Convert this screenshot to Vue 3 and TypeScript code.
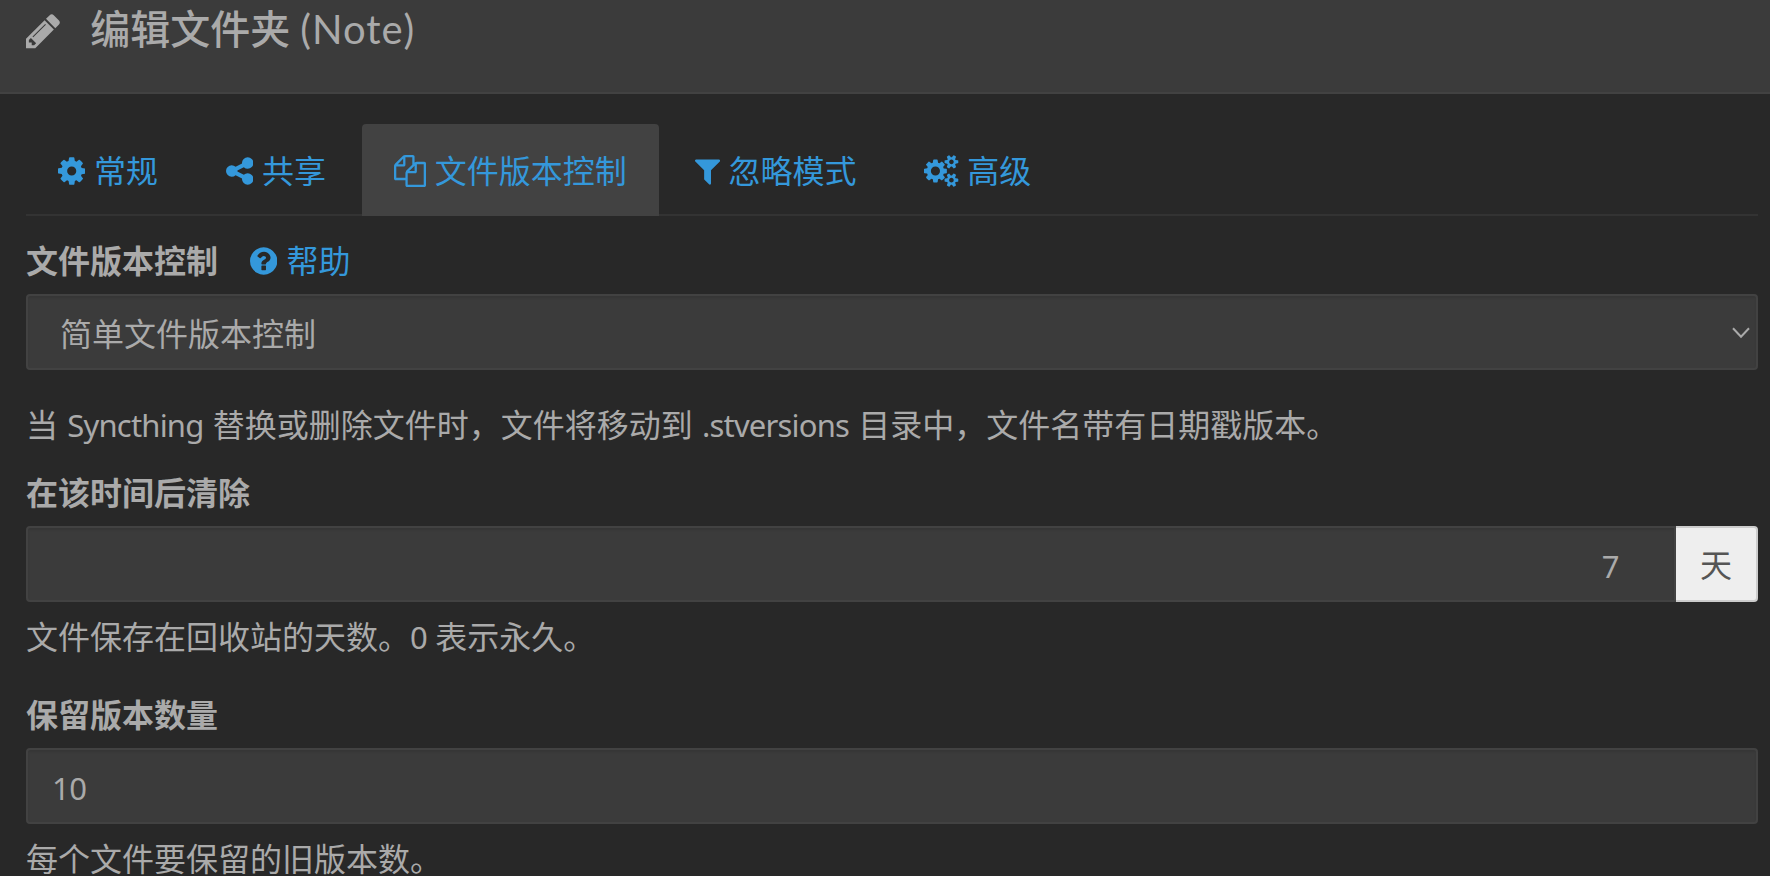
<template>
    <div class="modal">
        <header class="modal-header">
            <svg class="header-icon" viewBox="128 0 1536 1792"><path :d="icons.pencil" /></svg>
            <h4 class="modal-title">编辑文件夹 <span class="title-latin">(Note)</span></h4>
        </header>

        <div class="modal-body">
            <ul class="nav-tabs">
                <li v-for="tab in tabs" :key="tab.label" :class="{ active: tab.label === current }" @click="current = tab.label">
                    <svg class="fa" :style="{ width: `${tab.width / 56}px` }" :viewBox="`${tab.left} 0 ${tab.width} 1792`">
                        <path :d="tab.icon" />
                    </svg>
                    <span>{{ tab.label }}</span>
                </li>
            </ul>

            <div class="label-row">
                <label>文件版本控制</label>
                <a class="help-link">
                    <svg class="fa help-icon" viewBox="128 0 1536 1792"><path :d="icons.question" /></svg>
                    <span>帮助</span>
                </a>
            </div>
            <div class="select-wrap">
                <select class="form-control">
                    <option>简单文件版本控制</option>
                </select>
                <svg class="chevron" viewBox="0 0 18 12"><path d="M1 1.3l8 8.4 8-8.4" /></svg>
            </div>
            <p class="description">当 <span class="latin">Syncthing</span> 替换或删除文件时，文件将移动到 <span class="latin">.stversions</span> 目录中，文件名带有日期戳版本。</p>

            <div class="label-row"><label>在该时间后清除</label></div>
            <div class="input-group">
                <input v-model="cleanoutDays" class="form-control days" type="text">
                <span class="addon">天</span>
            </div>
            <p class="help-block">文件保存在回收站的天数。<span class="latin">0</span> 表示永久。</p>

            <div class="label-row"><label>保留版本数量</label></div>
            <input v-model="keepVersions" class="form-control" type="text">
            <p class="help-block">每个文件要保留的旧版本数。</p>
        </div>
    </div>
</template>

<script setup lang="ts">
import { ref } from 'vue';

type Tab = {
    label: string
    icon: string
    left: number
    width: number
}

const icons = {
    pencil: 'M491 1536l91-91-235-235-91 91v107h128v128h107zm523-928q0-22-22-22-10 0-17 7l-542 542q-7 7-7 17 0 22 22 22 10 0 17-7l542-542q7-7 7-17zm-54-192l416 416-832 832h-416v-416zm683 96q0 53-37 90l-166 166-416-416 166-165q36-38 90-38 53 0 91 38l235 234q37 39 37 91z',
    cog: 'M1152 896q0-106-75-181t-181-75-181 75-75 181 75 181 181 75 181-75 75-181zm512-109v222q0 12-8 23t-20 13l-185 28q-19 54-39 91 35 50 107 138 10 12 10 25t-9 23q-27 37-99 108t-94 71q-12 0-26-9l-138-108q-44 23-91 38-16 136-29 186-7 28-36 28h-222q-14 0-24.5-8.5t-11.5-21.5l-28-184q-49-16-90-37l-141 107q-10 9-25 9-14 0-25-11-126-114-165-168-7-10-7-23 0-12 8-23 15-21 51-66.5t54-70.5q-27-50-41-99l-183-27q-13-2-21-12.5t-8-23.5v-222q0-12 8-23t19-13l186-28q14-46 39-92-40-57-107-138-10-12-10-24 0-10 9-23 26-36 98.5-107.5t94.5-71.5q13 0 26 10l138 107q44-23 91-38 16-136 29-186 7-28 36-28h222q14 0 24.5 8.5t11.5 21.5l28 184q49 16 90 37l142-107q9-9 24-9 13 0 25 10 129 119 165 170 7 8 7 22 0 12-8 23-15 21-51 66.5t-54 70.5q26 50 41 98l183 28q13 2 21 12.5t8 23.5z',
    share: 'M1344 1024q133 0 226.5 93.5t93.5 226.5-93.5 226.5-226.5 93.5-226.5-93.5-93.5-226.5q0-12 2-34l-360-180q-92 86-218 86-133 0-226.5-93.5t-93.5-226.5 93.5-226.5 226.5-93.5q126 0 218 86l360-180q-2-22-2-34 0-133 93.5-226.5t226.5-93.5 226.5 93.5 93.5 226.5-93.5 226.5-226.5 93.5q-126 0-218-86l-360 180q2 22 2 34t-2 34l360 180q92-86 218-86z',
    files: 'M1696 384q40 0 68 28t28 68v1216q0 40-28 68t-68 28h-960q-40 0-68-28t-28-68v-288h-544q-40 0-68-28t-28-68v-672q0-40 20-88t48-76l408-408q28-28 76-48t88-20h416q40 0 68 28t28 68v328q68-40 128-40h416zm-544 213l-299 299h299v-299zm-640-384l-299 299h299v-299zm196 647l316-316v-416h-384v416q0 40-28 68t-68 28h-416v640h512v-256q0-40 20-88t48-76zm956 804v-1152h-384v416q0 40-28 68t-68 28h-416v640h896z',
    filter: 'M1595 295q17 41-14 70l-493 493v742q0 42-39 59-13 5-25 5-27 0-45-19l-256-256q-19-19-19-45v-486l-493-493q-31-29-14-70 17-39 59-39h1280q42 0 59 39z',
    cogs: 'M896 896q0-106-75-181t-181-75-181 75-75 181 75 181 181 75 181-75 75-181zm768 512q0-52-38-90t-90-38-90 38-38 90q0 53 37.5 90.5t90.5 37.5 90.5-37.5 37.5-90.5zm0-1024q0-52-38-90t-90-38-90 38-38 90q0 53 37.5 90.5t90.5 37.5 90.5-37.5 37.5-90.5zm-384 421v185q0 10-7 19.5t-16 10.5l-155 24q-11 35-32 76 34 48 90 115 7 11 7 20 0 12-7 19-23 30-82.5 89.5t-78.5 59.5q-11 0-21-7l-115-90q-37 19-77 31-11 108-23 155-7 24-30 24h-186q-11 0-20-7.5t-10-17.5l-23-153q-34-10-75-31l-118 89q-7 7-20 7-11 0-21-8-144-133-144-160 0-9 7-19 10-14 41-53t47-61q-23-44-35-82l-152-24q-10-1-17-9.5t-7-19.5v-185q0-10 7-19.5t16-10.5l155-24q11-35 32-76-34-48-90-115-7-11-7-20 0-12 7-20 22-30 82-89t79-59q11 0 21 7l115 90q34-18 77-32 11-108 23-154 7-24 30-24h186q11 0 20 7.5t10 17.5l23 153q34 10 75 31l118-89q8-7 20-7 11 0 21 8 144 133 144 160 0 8-7 19-12 16-42 54t-45 60q23 48 34 82l152 23q10 2 17 10.5t7 19.5zm640 533v140q0 16-149 31-12 27-30 52 51 113 51 138 0 4-4 7-122 71-124 71-8 0-46-47t-52-68q-20 2-30 2t-30-2q-14 21-52 68t-46 47q-2 0-124-71-4-3-4-7 0-25 51-138-18-25-30-52-149-15-149-31v-140q0-16 149-31 13-29 30-52-51-113-51-138 0-4 4-7 4-2 35-20t59-34 30-16q8 0 46 46.5t52 67.5q20-2 30-2t30 2q51-71 92-112l6-2q4 0 124 70 4 3 4 7 0 25-51 138 17 23 30 52 149 15 149 31zm0-1024v140q0 16-149 31-12 27-30 52 51 113 51 138 0 4-4 7-122 71-124 71-8 0-46-47t-52-68q-20 2-30 2t-30-2q-14 21-52 68t-46 47q-2 0-124-71-4-3-4-7 0-25 51-138-18-25-30-52-149-15-149-31v-140q0-16 149-31 13-29 30-52-51-113-51-138 0-4 4-7 4-2 35-20t59-34 30-16q8 0 46 46.5t52 67.5q20-2 30-2t30 2q51-71 92-112l6-2q4 0 124 70 4 3 4 7 0 25-51 138 17 23 30 52 149 15 149 31z',
    question: 'M1024 1376v-192q0-14-9-23t-23-9h-192q-14 0-23 9t-9 23v192q0 14 9 23t23 9h192q14 0 23-9t9-23zm256-672q0-88-55.5-163t-138.5-116-170-41q-243 0-371 213-15 24 8 42l132 100q7 6 19 6 16 0 25-12 53-68 86-92 34-24 86-24 48 0 85.5 26t37.5 59q0 38-20 61t-68 45q-63 28-115.5 86.5t-52.5 125.5v36q0 14 9 23t23 9h192q14 0 23-9t9-23q0-19 21.5-49.5t54.5-49.5q32-18 49-28.5t46-35 44.5-48 28-60.5 12.5-81zm384 192q0 209-103 385.5t-279.5 279.5-385.5 103-385.5-103-279.5-279.5-103-385.5 103-385.5 279.5-279.5 385.5-103 385.5 103 279.5 279.5 103 385.5z',
}

const tabs: Tab[] = [
    { label: '常规', icon: icons.cog, left: 128, width: 1536 },
    { label: '共享', icon: icons.share, left: 128, width: 1536 },
    { label: '文件版本控制', icon: icons.files, left: 0, width: 1792 },
    { label: '忽略模式', icon: icons.filter, left: 192, width: 1408 },
    { label: '高级', icon: icons.cogs, left: 0, width: 1920 },
]

const current = ref('文件版本控制')
const cleanoutDays = ref('7')
const keepVersions = ref('10')
</script>

<style>
body {
    background-color: #282828;
}
</style>

<style scoped>
.modal {
    box-sizing: border-box;
    width: 100%;
    height: 876px;
    overflow: hidden;
    background-color: #282828;
    color: #aaa;
    font-family: "Noto Sans", "Noto Sans CJK SC", sans-serif;
    font-size: 32px;
    line-height: 46px;
}

.modal * {
    box-sizing: border-box;
}

.modal-header {
    display: flex;
    align-items: flex-start;
    height: 94px;
    padding: 0 26px;
    background-color: #3b3b3b;
    border-bottom: 2px solid #424242;
}

.header-icon {
    width: 34.3px;
    height: 40px;
    margin: 11px 30px 0 0;
    fill: #aaa;
}

.modal-title {
    margin: 1px 0 0;
    font-family: "Noto Sans CJK SC", sans-serif;
    font-size: 40px;
    font-weight: 500;
    line-height: 52px;
    word-spacing: 1px;
    white-space: nowrap;
}

.title-latin {
    font-family: Lato, sans-serif;
    font-weight: 400;
    letter-spacing: 1px;
}

.modal-body {
    padding: 30px 12px 0 26px;
}

.nav-tabs {
    display: flex;
    gap: 4px;
    height: 92px;
    margin: 0 0 22px;
    padding: 0;
    list-style: none;
    box-shadow: inset 0 -2px #333;
}

.nav-tabs li {
    display: flex;
    align-items: center;
    gap: 8.6px;
    padding: 1px 32px 0;
    border-radius: 4px 4px 0 0;
    color: #3498db;
    white-space: nowrap;
    cursor: pointer;
}

.nav-tabs li.active {
    background-color: #424242;
}

.fa {
    flex: none;
    height: 32px;
    fill: #3498db;
}

.label-row {
    display: flex;
    align-items: center;
    height: 46px;
    margin-bottom: 10px;
}

label {
    font-weight: 700;
}

.help-link {
    display: flex;
    align-items: center;
    gap: 9px;
    margin-left: 32px;
    color: #3498db;
}

.help-icon {
    width: 27.4px;
}

.select-wrap {
    position: relative;
}

.form-control {
    display: block;
    width: 100%;
    height: 76px;
    margin: 0;
    padding: 3px 24px 0;
    background-color: #3b3b3b;
    border: 2px solid #424242;
    border-radius: 4px;
    box-shadow: inset 0 2px 2px rgba(0, 0, 0, 0.075);
    color: #aaa;
    font: inherit;
    font-size: 31px;
    letter-spacing: -0.6px;
    outline: none;
    appearance: none;
}

select.form-control {
    padding: 4px 32px 0;
    font-size: 32px;
    letter-spacing: 0;
}

.chevron {
    position: absolute;
    top: 33px;
    right: 8px;
    width: 18px;
    height: 12px;
    fill: none;
    stroke: #aaa;
    stroke-width: 2;
}

p {
    margin: 0;
    white-space: nowrap;
}

.latin {
    font-size: 31px;
    letter-spacing: -0.8px;
}

.description {
    margin: 32px 0 22px;
    word-spacing: 0.9px;
}

.input-group {
    display: flex;
}

.form-control.days {
    flex: 1;
    border-radius: 4px 0 0 4px;
    padding-right: 55px;
    text-align: right;
}

.addon {
    display: flex;
    align-items: center;
    justify-content: center;
    width: 82px;
    height: 76px;
    padding-top: 2px;
    background-color: #eee;
    border: 2px solid #ccc;
    border-left: 0;
    border-radius: 0 4px 4px 0;
    color: #555;
}

.help-block {
    margin: 12px 0 32px;
}
</style>
